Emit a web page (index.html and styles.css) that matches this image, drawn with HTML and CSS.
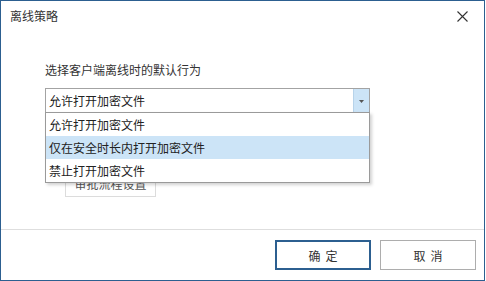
FILE: index.html
```html
<!DOCTYPE html>
<html lang="zh-CN">
<head>
<meta charset="utf-8">
<title>离线策略</title>
<link rel="stylesheet" href="styles.css">
</head>
<body>
<div class="dialog">
  <div class="header">
    <span class="title">离线策略</span>
    <svg class="close" width="11" height="11" viewBox="0 0 11 11"><path d="M0.5 0.5 L10.5 10.5 M10.5 0.5 L0.5 10.5" stroke="#333" stroke-width="1.1" fill="none"/></svg>
  </div>
  <div class="body">
    <div class="label">选择客户端离线时的默认行为</div>
    <div class="select-wrap">
      <div class="select">
        <span class="select-text">允许打开加密文件</span>
        <span class="arrow"><svg width="5" height="3" viewBox="0 0 5 3"><path d="M0 0 H5 L2.5 3 Z" fill="#555"/></svg></span>
      </div>
      <ul class="options">
        <li class="option">允许打开加密文件</li>
        <li class="option active">仅在安全时长内打开加密文件</li>
        <li class="option">禁止打开加密文件</li>
      </ul>
    </div>
    <button class="flow-btn">审批流程设置</button>
  </div>
  <div class="footer">
    <button class="btn primary">确定</button>
    <button class="btn">取消</button>
  </div>
</div>
</body>
</html>
```
FILE: styles.css
```css
html, body {
  margin: 0;
  padding: 0;
  background: #ffffff;
}
body {
  font-family: "Noto Sans CJK SC", "Noto Sans", sans-serif;
  font-size: 12px;
  color: #333333;
}
.dialog {
  width: 485px;
  height: 281px;
  box-sizing: border-box;
  border: 1px solid #2c5f90;
  display: flex;
  flex-direction: column;
  background: #ffffff;
}
.header {
  height: 30px;
  flex: none;
  display: flex;
  align-items: center;
  justify-content: space-between;
  padding: 0 16px 0 9px;
}
.title {
  font-size: 12px;
  color: #333;
  line-height: 30px;
}
.close {
  display: block;
  margin-top: 1px;
}
.body {
  flex: 1;
  padding: 31px 0 0 44px;
  box-sizing: border-box;
}
.label {
  line-height: 16px;
  color: #333;
}
.select-wrap {
  position: relative;
  width: 325px;
  margin-top: 10px;
}
.select {
  height: 25px;
  box-sizing: border-box;
  border: 1px solid #a3a3a3;
  display: flex;
  align-items: stretch;
}
.select-text {
  flex: 1;
  padding-left: 3px;
  line-height: 23px;
  color: #222;
}
.arrow {
  width: 15px;
  background: #cce4f7;
  border-left: 1px solid #b7d3ea;
  display: flex;
  align-items: center;
  justify-content: center;
}
.arrow svg {
  display: block;
  margin-top: 1px;
}
.options {
  position: absolute;
  left: 0;
  top: 24px;
  width: 325px;
  box-sizing: border-box;
  margin: 0;
  padding: 0;
  list-style: none;
  border: 1px solid #9a9a9a;
  background: #ffffff;
  box-shadow: 2px 2px 3px rgba(0, 0, 0, 0.18);
  z-index: 2;
}
.option {
  height: 23px;
  line-height: 23px;
  padding-left: 3px;
  color: #222;
}
.option.active {
  background: #cce4f7;
}
.flow-btn {
  display: block;
  margin: 57px 0 0 20px;
  width: 91px;
  height: 27px;
  box-sizing: border-box;
  border: 1px solid #dcdcdc;
  background: #ffffff;
  font-family: inherit;
  font-size: 12px;
  color: #555;
  padding: 0;
}
.footer {
  flex: none;
  border-top: 1px solid #dedede;
  padding: 10px 8px 10px 0;
  display: flex;
  justify-content: flex-end;
  gap: 9px;
}
.btn {
  width: 96px;
  height: 30px;
  box-sizing: border-box;
  border: 1px solid #adadad;
  background: #ffffff;
  font-family: inherit;
  font-size: 12px;
  color: #333;
  letter-spacing: 5px;
  padding: 0 0 0 5px;
}
.btn.primary {
  border: 2px solid #2c5f90;
}
```
